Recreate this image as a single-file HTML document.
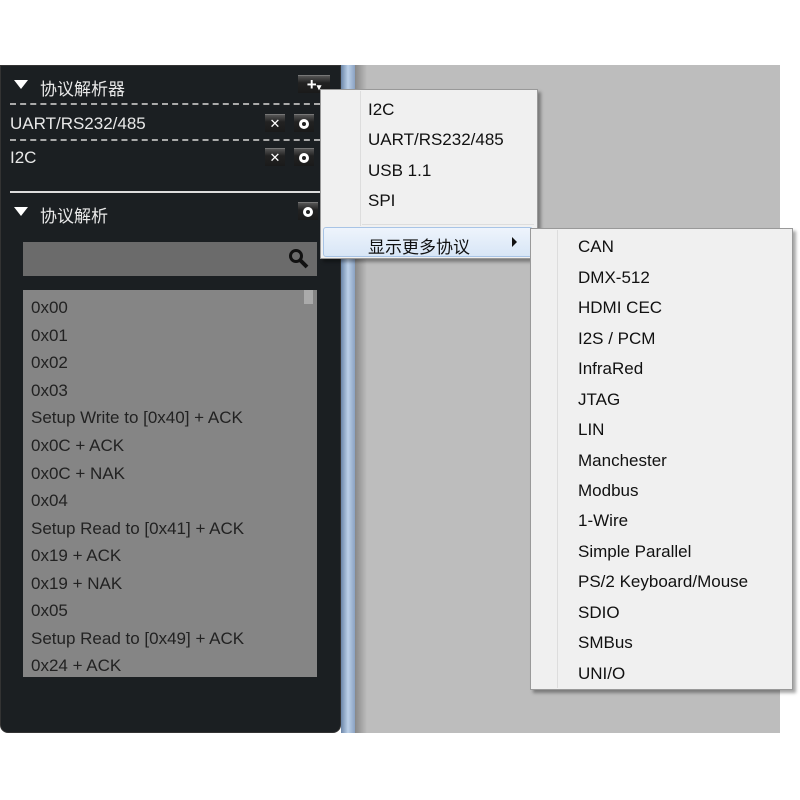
<!DOCTYPE html>
<html><head><meta charset="utf-8"><style>
*{margin:0;padding:0;box-sizing:border-box}
body{width:800px;height:800px;background:#fff;position:relative;overflow:hidden;font-family:"Liberation Sans","Noto Sans CJK SC",sans-serif}
.a{position:absolute}
.panel{left:0;top:65px;width:341px;height:668px;background:#1b1f22;border-radius:0 0 8px 8px;border:1px solid #333}
.t{color:#e8e8e8;font-size:17px;white-space:nowrap}
.btn{width:20px;height:18px;background:linear-gradient(#555,#222 40%,#1a1a1a);border-top:1px solid #777;color:#fff;font-size:13px;text-align:center;line-height:17px}
.ring{position:absolute;left:5px;top:4px;width:10px;height:10px;border:3px solid #fff;border-radius:50%}
.dash{height:0;border-top:2px dashed #aaa}
.li{left:31px;color:#222;font-size:17px;white-space:nowrap}
.menu{background:#f0f0f0;border:1px solid #999;box-shadow:3px 3px 3px rgba(0,0,0,.35)}
.mi{color:#111;font-size:17px;white-space:nowrap}
</style></head><body>
<div class="a" style="left:341px;top:65px;width:14px;height:668px;background:linear-gradient(90deg,#6b86a8,#bcd0e8,#8aa2c2)"></div>
<div class="a" style="left:355px;top:65px;width:425px;height:668px;background:linear-gradient(90deg,#888,#bdbdbd 12px,#bdbdbd)"></div>
<div class="a panel"></div>
<div class="a" style="left:14px;top:80px;width:0;height:0;border-left:7px solid transparent;border-right:7px solid transparent;border-top:9px solid #fff"></div>
<div class="a t" style="left:40px;top:75px">协议解析器</div>
<div class="a btn" style="left:298px;top:75px;width:32px;font-weight:bold;font-size:17px">+<span style="font-size:9px">▾</span></div>
<div class="a dash" style="left:10px;top:103px;width:310px"></div>
<div class="a t" style="left:10px;top:114px">UART/RS232/485</div>
<div class="a btn" style="left:265px;top:114px">✕</div>
<div class="a btn" style="left:294px;top:114px"><div class="ring"></div></div>
<div class="a dash" style="left:10px;top:139px;width:310px"></div>
<div class="a t" style="left:10px;top:148px">I2C</div>
<div class="a btn" style="left:265px;top:148px">✕</div>
<div class="a btn" style="left:294px;top:148px"><div class="ring"></div></div>
<div class="a" style="left:10px;top:191px;width:310px;height:2px;background:#ddd"></div>
<div class="a" style="left:14px;top:207px;width:0;height:0;border-left:7px solid transparent;border-right:7px solid transparent;border-top:9px solid #fff"></div>
<div class="a t" style="left:40px;top:202px">协议解析</div>
<div class="a btn" style="left:298px;top:202px"><div class="ring"></div></div>
<div class="a" style="left:23px;top:242px;width:294px;height:34px;background:#6b6b6b"></div>
<svg class="a" style="left:288px;top:248px" width="22" height="22"><circle cx="8" cy="8" r="5.5" fill="none" stroke="#111" stroke-width="3"/><line x1="12" y1="12" x2="19" y2="19" stroke="#111" stroke-width="4"/></svg>
<div class="a" style="left:23px;top:290px;width:294px;height:387px;background:#858585"></div>
<div class="a" style="left:304px;top:290px;width:9px;height:14px;background:#aaa"></div>
<div class="a li" style="top:298px">0x00</div>
<div class="a li" style="top:326px">0x01</div>
<div class="a li" style="top:353px">0x02</div>
<div class="a li" style="top:381px">0x03</div>
<div class="a li" style="top:408px">Setup Write to [0x40] + ACK</div>
<div class="a li" style="top:436px">0x0C + ACK</div>
<div class="a li" style="top:464px">0x0C + NAK</div>
<div class="a li" style="top:491px">0x04</div>
<div class="a li" style="top:519px">Setup Read to [0x41] + ACK</div>
<div class="a li" style="top:546px">0x19 + ACK</div>
<div class="a li" style="top:574px">0x19 + NAK</div>
<div class="a li" style="top:601px">0x05</div>
<div class="a li" style="top:629px">Setup Read to [0x49] + ACK</div>
<div class="a li" style="top:656px;height:21px;overflow:hidden">0x24 + ACK</div>

<div class="a menu" style="left:320px;top:89px;width:218px;height:170px"></div>
<div class="a" style="left:360px;top:91px;width:1px;height:135px;background:#ddd"></div>
<div class="a" style="left:362px;top:224px;width:172px;height:1px;background:#ddd"></div>
<div class="a" style="left:323px;top:227px;width:210px;height:30px;background:linear-gradient(#eef4fc,#d8e6f6);border:1px solid #a8c4e6;border-radius:3px"></div>
<div class="a mi" style="left:368px;top:100px">I2C</div>
<div class="a mi" style="left:368px;top:130px">UART/RS232/485</div>
<div class="a mi" style="left:368px;top:161px">USB 1.1</div>
<div class="a mi" style="left:368px;top:191px">SPI</div>
<div class="a mi" style="left:368px;top:233px">显示更多协议</div>
<div class="a" style="left:512px;top:237px;width:0;height:0;border-top:5px solid transparent;border-bottom:5px solid transparent;border-left:5px solid #111"></div>

<div class="a menu" style="left:530px;top:228px;width:263px;height:462px"></div>
<div class="a" style="left:557px;top:230px;width:1px;height:458px;background:#ddd"></div>
<div class="a mi" style="left:578px;top:237px">CAN</div>
<div class="a mi" style="left:578px;top:268px">DMX-512</div>
<div class="a mi" style="left:578px;top:298px">HDMI CEC</div>
<div class="a mi" style="left:578px;top:329px">I2S / PCM</div>
<div class="a mi" style="left:578px;top:359px">InfraRed</div>
<div class="a mi" style="left:578px;top:390px">JTAG</div>
<div class="a mi" style="left:578px;top:420px">LIN</div>
<div class="a mi" style="left:578px;top:451px">Manchester</div>
<div class="a mi" style="left:578px;top:481px">Modbus</div>
<div class="a mi" style="left:578px;top:511px">1-Wire</div>
<div class="a mi" style="left:578px;top:542px">Simple Parallel</div>
<div class="a mi" style="left:578px;top:572px">PS/2 Keyboard/Mouse</div>
<div class="a mi" style="left:578px;top:603px">SDIO</div>
<div class="a mi" style="left:578px;top:633px">SMBus</div>
<div class="a mi" style="left:578px;top:664px">UNI/O</div>
</body></html>
